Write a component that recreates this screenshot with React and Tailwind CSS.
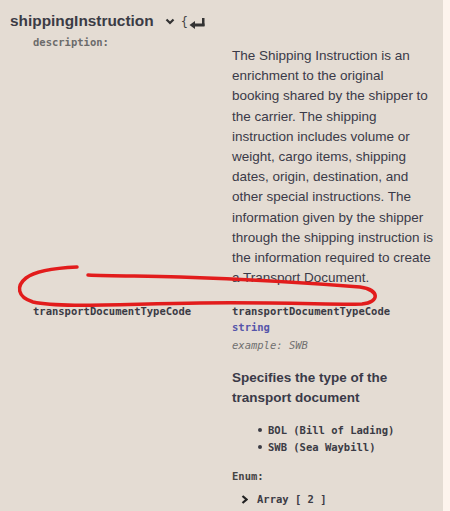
import React from "react";

const sans = "font-['Liberation_Sans',Arial,sans-serif]";
const mono = "font-['DejaVu_Sans_Mono','Liberation_Mono',monospace]";

const descriptionLines = [
  "The Shipping Instruction is an",
  "enrichment to the original",
  "booking shared by the shipper to",
  "the carrier. The shipping",
  "instruction includes volume or",
  "weight, cargo items, shipping",
  "dates, origin, destination, and",
  "other special instructions. The",
  "information given by the shipper",
  "through the shipping instruction is",
  "the information required to create",
  "a Transport Document.",
];

export default function App() {
  return (
    <div className="flex h-[511px] w-[450px] overflow-hidden bg-[#fdf4ed]">
      <section className="relative w-[443px] shrink-0 bg-[#e4dcd3] pt-[11px]">
        <div className={`flex h-[20px] items-center pl-[10px] ${sans}`}>
          <span className="text-[15.4px] font-bold leading-[20px] text-[#3b3b45]">shippingInstruction</span>
          <svg className="ml-[11px] mt-[1px]" width="10" height="7" viewBox="0 0 10 7">
            <polyline points="1.5,1.5 5,5 8.5,1.5" fill="none" stroke="#333" strokeWidth="2.2" />
          </svg>
          <span className={`ml-[6px] mt-[2px] text-[12px] leading-none text-[#444] ${mono}`}>{"{"}</span>
          <svg className="ml-[1px] mt-[3px]" width="16" height="12" viewBox="0 0 16 12">
            <path d="M0.5,8 L6,4 L6,12 Z" fill="#333" />
            <rect x="4" y="6.5" width="11.5" height="3" fill="#333" />
            <rect x="13" y="1" width="2.5" height="8" fill="#333" />
          </svg>
        </div>

        <div className="mt-[4px] flex">
          <div className={`w-[232px] shrink-0 pl-[33px] text-[10.5px] font-bold leading-[14px] text-[#6b6b6b] ${mono}`}>
            description:
          </div>
          <p className={`mt-[11px] w-[208px] whitespace-nowrap text-[13.5px] leading-[20.2px] text-[#3a3a48] ${sans}`}>
            {descriptionLines.map((line) => (
              <span key={line} className="block">
                {line}
              </span>
            ))}
          </p>
        </div>

        <div className="mt-[15.6px] flex">
          <div className={`w-[232px] shrink-0 pl-[33px] text-[10.5px] font-bold leading-[14px] text-[#3b3b45] ${mono}`}>
            transportDocumentTypeCode
          </div>
          <div className="w-[211px]">
            <div className={`text-[10.5px] font-bold leading-[14px] text-[#3b3b45] ${mono}`}>transportDocumentTypeCode</div>
            <div className={`mt-[2px] text-[10.5px] font-bold leading-[14px] text-[#55a] ${mono}`}>string</div>
            <div className={`mt-[4px] text-[10.5px] italic leading-[14px] text-[#707070] ${mono}`}>example: SWB</div>
            <p className={`mt-[16px] w-[180px] text-[13.5px] font-bold leading-[20px] text-[#3a3a48] ${sans}`}>
              Specifies the type of the transport document
            </p>
            <ul className={`mt-[13.5px] pl-[26px] text-[10.5px] font-bold leading-[17px] text-[#3b3b45] ${mono}`}>
              <li className="flex items-center gap-[6px]">
                <span className="h-[4px] w-[4px] rounded-full bg-[#3b3b45]" />
                BOL (Bill of Lading)
              </li>
              <li className="flex items-center gap-[6px]">
                <span className="h-[4px] w-[4px] rounded-full bg-[#3b3b45]" />
                SWB (Sea Waybill)
              </li>
            </ul>
            <div className={`mt-[13.5px] text-[10.5px] font-bold leading-[14px] text-[#444] ${mono}`}>Enum:</div>
            <div className={`mt-[9px] flex items-center pl-[9px] text-[10.5px] font-bold leading-[14px] text-[#3b3b45] ${mono}`}>
              <svg width="7" height="9" viewBox="0 0 7 9">
                <polyline points="1.5,1 5.5,4.5 1.5,8" fill="none" stroke="#222" strokeWidth="2.2" />
              </svg>
              <span className="ml-[9px] whitespace-pre">Array [ 2 ]</span>
            </div>
          </div>
        </div>

        <svg className="pointer-events-none absolute left-0 top-0" width="443" height="511" viewBox="0 0 443 511">
          <path
            d="M77,267 C55,268 35,271 26,278 C16,286 17,297 33,302 C60,308 120,304 200,303 C280,302 340,305 362,304 C380,302 380,290 360,287 C310,283 240,279 180,277 C140,276 110,276 88,275"
            fill="none"
            stroke="#e21c1c"
            strokeWidth="3.5"
            strokeLinecap="round"
          />
        </svg>
      </section>
      <div className="flex-1" />
    </div>
  );
}
